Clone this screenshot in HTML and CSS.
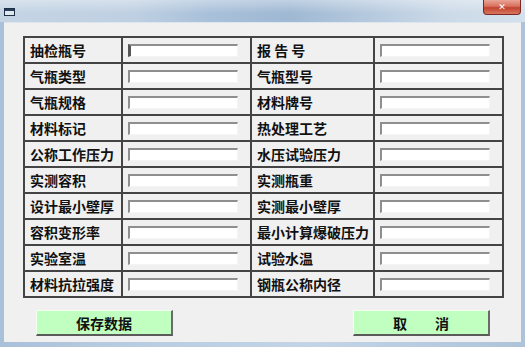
FILE: index.html
```html
<!DOCTYPE html>
<html lang="zh-CN">
<head>
  <meta charset="UTF-8" />
  <title>气瓶数据录入</title>
  <link rel="stylesheet" href="styles.css">
</head>
<body>
  <div class="ventana">
    <div class="titulo">
      <svg class="icono" width="11" height="8" viewBox="0 0 11 8">
        <rect x="0.5" y="0.5" width="10" height="7" fill="#dfe8f1" stroke="#1f2f45" />
        <rect x="1" y="1" width="9" height="2" fill="#2a3d58" />
      </svg>
      <div class="cerrar">&#x2715;</div>
    </div>

    <div class="cliente">
      <table class="datos">
        <colgroup>
          <col class="c-etiqueta1" />
          <col class="c-campo" />
          <col class="c-etiqueta2" />
          <col class="c-campo" />
        </colgroup>
        <tr>
          <td class="etiqueta">抽检瓶号</td>
          <td><input type="text" class="campo activo" /></td>
          <td class="etiqueta">报 告 号</td>
          <td><input type="text" class="campo" /></td>
        </tr>
        <tr>
          <td class="etiqueta">气瓶类型</td>
          <td><input type="text" class="campo" /></td>
          <td class="etiqueta">气瓶型号</td>
          <td><input type="text" class="campo" /></td>
        </tr>
        <tr>
          <td class="etiqueta">气瓶规格</td>
          <td><input type="text" class="campo" /></td>
          <td class="etiqueta">材料牌号</td>
          <td><input type="text" class="campo" /></td>
        </tr>
        <tr>
          <td class="etiqueta">材料标记</td>
          <td><input type="text" class="campo" /></td>
          <td class="etiqueta">热处理工艺</td>
          <td><input type="text" class="campo" /></td>
        </tr>
        <tr>
          <td class="etiqueta">公称工作压力</td>
          <td><input type="text" class="campo" /></td>
          <td class="etiqueta">水压试验压力</td>
          <td><input type="text" class="campo" /></td>
        </tr>
        <tr>
          <td class="etiqueta">实测容积</td>
          <td><input type="text" class="campo" /></td>
          <td class="etiqueta">实测瓶重</td>
          <td><input type="text" class="campo" /></td>
        </tr>
        <tr>
          <td class="etiqueta">设计最小壁厚</td>
          <td><input type="text" class="campo" /></td>
          <td class="etiqueta">实测最小壁厚</td>
          <td><input type="text" class="campo" /></td>
        </tr>
        <tr>
          <td class="etiqueta">容积变形率</td>
          <td><input type="text" class="campo" /></td>
          <td class="etiqueta">最小计算爆破压力</td>
          <td><input type="text" class="campo" /></td>
        </tr>
        <tr>
          <td class="etiqueta">实验室温</td>
          <td><input type="text" class="campo" /></td>
          <td class="etiqueta">试验水温</td>
          <td><input type="text" class="campo" /></td>
        </tr>
        <tr>
          <td class="etiqueta">材料抗拉强度</td>
          <td><input type="text" class="campo" /></td>
          <td class="etiqueta">钢瓶公称内径</td>
          <td><input type="text" class="campo" /></td>
        </tr>
      </table>

      <div class="botones">
        <button type="button" class="boton">保存数据</button>
        <button type="button" class="boton">取　　消</button>
      </div>
    </div>
  </div>
</body>
</html>
```

FILE: styles.css
```css
body {
  margin: 0;
  font-family: "Noto Sans CJK SC", "Liberation Sans", sans-serif;
}

.ventana {
  width: 525px;
  height: 347px;
  box-sizing: border-box;
  padding: 0 4px 5px 4px;
  background: linear-gradient(to right, #a9c0d9 0%, #b7cbe0 20%, #c3d4e6 60%, #aec3da 100%);
  display: flex;
  flex-direction: column;
}

.titulo {
  height: 22px;
  flex: none;
  margin: 0 -4px;
  position: relative;
  background:
    linear-gradient(to bottom, rgba(255,255,255,0.35), rgba(255,255,255,0) 60%),
    linear-gradient(to right, #c4d4e4 0%, #bfd0e2 25%, #a9c0da 40%, #9fb8d3 55%, #b5c9de 70%, #ccdae8 85%, #d4e0ec 100%);
}

.icono {
  position: absolute;
  left: 4px;
  top: 8px;
}

.cerrar {
  position: absolute;
  right: 4px;
  top: 0;
  width: 38px;
  height: 15px;
  box-sizing: border-box;
  border: 1px solid #7a2a22;
  border-top: none;
  border-radius: 0 0 4px 4px;
  background: linear-gradient(to bottom, #e9a596 0%, #d7705f 45%, #c2432f 55%, #d8765c 100%);
  color: #fff;
  font-family: "DejaVu Sans", sans-serif;
  font-size: 9px;
  font-weight: bold;
  line-height: 14px;
  text-align: center;
}

.cliente {
  flex: 1;
  background: #f0f0f0;
  border-top: 1px solid #dde6ef;
  padding: 13px 0 0 19px;
}

.datos {
  border-collapse: collapse;
  table-layout: fixed;
  width: 478px;
}

.c-etiqueta1 { width: 98px; }
.c-etiqueta2 { width: 123px; }
.c-campo { width: 129px; }

.datos td {
  border: 2px solid #444;
  height: 24px;
  padding: 0 0 0 5px;
  background: #f0f0f0;
  vertical-align: middle;
}

.etiqueta {
  font-size: 14px;
  font-weight: bold;
  color: #111;
  white-space: nowrap;
}

.campo {
  display: block;
  width: 110px;
  height: 13px;
  box-sizing: border-box;
  margin: 0;
  padding: 0;
  background: #fff;
  border-style: solid;
  border-width: 2px 1px 1px 2px;
  border-color: #8e8e8e #f4f4f4 #f4f4f4 #8e8e8e;
  outline: none;
}

.activo {
  border-left: 3px solid #555;
}

.botones {
  display: flex;
  justify-content: space-between;
  margin-top: 12px;
  padding: 0 31px 0 13px;
}

.boton {
  width: 137px;
  height: 26px;
  box-sizing: border-box;
  background: #c0ffc0;
  border-style: solid;
  border-width: 1px 2px 2px 1px;
  border-color: #f4fff4 #6a6a6a #5a5a5a #f4fff4;
  font-family: "Noto Sans CJK SC", sans-serif;
  font-size: 14px;
  font-weight: bold;
  color: #111;
  padding: 0;
  cursor: pointer;
}
```
